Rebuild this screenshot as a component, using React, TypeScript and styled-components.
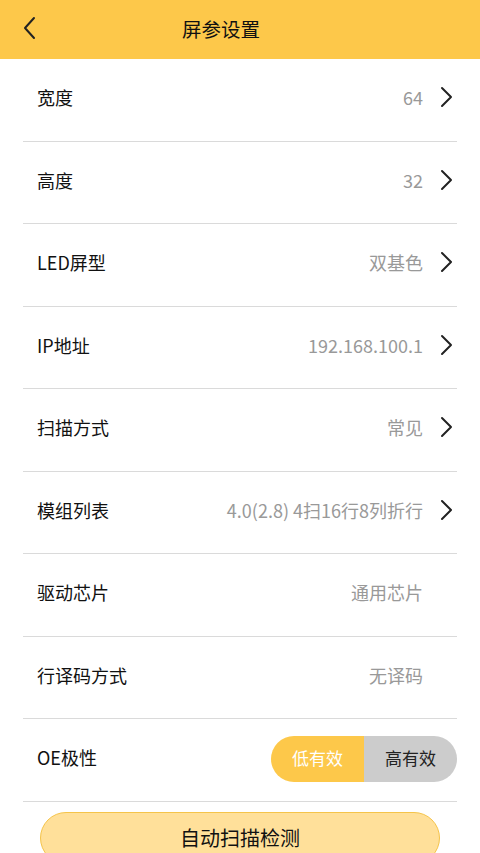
import React, { useState } from "react";
import styled, { createGlobalStyle } from "styled-components";

const GlobalStyle = createGlobalStyle`
  html, body {
    margin: 0;
    padding: 0;
    background: #ffffff;
    font-family: "Noto Sans CJK SC", "Noto Sans", sans-serif;
  }
  * { box-sizing: border-box; }
`;

const Page = styled.div`
  width: 480px;
  height: 853px;
  overflow: hidden;
  background: #fff;
`;

const Header = styled.div`
  height: 59px;
  background: #fdc84a;
  display: flex;
  align-items: center;
  padding-left: 22px;
`;

const BackBtn = styled.div`
  width: 18px;
  height: 24px;
  display: flex;
  align-items: center;
  margin-top: -4px;
`;

const Title = styled.div`
  margin-left: 142px;
  font-size: 19.5px;
  color: #111;
  margin-top: -3px;
`;

const List = styled.div`
  margin: 0 23px;
`;

const Row = styled.div`
  height: 82.5px;
  border-bottom: 1.5px solid #dadada;
  display: flex;
  align-items: center;
  padding-left: 14px;
  padding-bottom: 5px;
`;

const Label = styled.div`
  flex: 1;
  font-size: 18px;
  color: #111;
`;

const Value = styled.div`
  font-size: 18px;
  color: #999999;
  margin-right: 16px;
`;

const Chevron = styled.div<{ $hidden?: boolean }>`
  width: 14px;
  margin-right: 4px;
  display: flex;
  visibility: ${(p) => (p.$hidden ? "hidden" : "visible")};
`;

const Toggle = styled.div`
  display: flex;
  height: 46px;
  border-radius: 23px;
  overflow: hidden;
  width: 186px;
  margin-top: 3px;
`;

const ToggleItem = styled.div<{ $active?: boolean }>`
  flex: 1;
  display: flex;
  align-items: center;
  justify-content: center;
  font-size: 17px;
  padding-bottom: 2px;
  background: ${(p) => (p.$active ? "#fdc84a" : "#cccccc")};
  color: ${(p) => (p.$active ? "#fff" : "#222")};
`;

const ScanButton = styled.div`
  margin: 10px 40px 0;
  height: 52px;
  border-radius: 26px;
  background: #ffe09a;
  border: 1.5px solid #f5c44a;
  display: flex;
  justify-content: center;
  padding-top: 10px;
  font-size: 20px;
  color: #111;
`;

const ChevronIcon = () => (
  <svg width="14" height="22" viewBox="0 0 14 22">
    <path d="M3 2 L12 11 L3 20" fill="none" stroke="#222" strokeWidth="2" strokeLinecap="round" strokeLinejoin="round" />
  </svg>
);

const rows = [
  { label: "宽度", value: "64", arrow: true },
  { label: "高度", value: "32", arrow: true },
  { label: "LED屏型", value: "双基色", arrow: true },
  { label: "IP地址", value: "192.168.100.1", arrow: true },
  { label: "扫描方式", value: "常见", arrow: true },
  { label: "模组列表", value: "4.0(2.8) 4扫16行8列折行", arrow: true },
  { label: "驱动芯片", value: "通用芯片", arrow: false },
  { label: "行译码方式", value: "无译码", arrow: false },
];

export default function App() {
  const [oe, setOe] = useState(0);
  return (
    <Page>
      <GlobalStyle />
      <Header>
        <BackBtn>
          <svg width="14" height="24" viewBox="0 0 14 24">
            <path d="M12 2 L3 12 L12 22" fill="none" stroke="#222" strokeWidth="2" strokeLinecap="round" strokeLinejoin="round" />
          </svg>
        </BackBtn>
        <Title>屏参设置</Title>
      </Header>
      <List>
        {rows.map((r) => (
          <Row key={r.label}>
            <Label>{r.label}</Label>
            <Value>{r.value}</Value>
            <Chevron $hidden={!r.arrow}>
              <ChevronIcon />
            </Chevron>
          </Row>
        ))}
        <Row>
          <Label>OE极性</Label>
          <Toggle>
            <ToggleItem $active={oe === 0} onClick={() => setOe(0)}>低有效</ToggleItem>
            <ToggleItem $active={oe === 1} onClick={() => setOe(1)}>高有效</ToggleItem>
          </Toggle>
        </Row>
      </List>
      <ScanButton>自动扫描检测</ScanButton>
    </Page>
  );
}
